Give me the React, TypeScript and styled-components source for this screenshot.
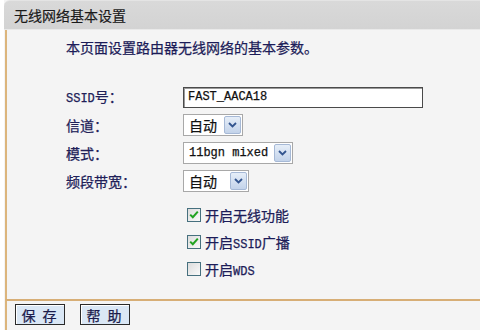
import React from "react";
import styled, {createGlobalStyle} from "styled-components";

const GlobalStyle = createGlobalStyle`
  html, body {
    margin: 0;
    padding: 0;
    background: #ffffff;
  }
  body {
    font-family: "Noto Sans CJK SC", "Liberation Sans", sans-serif;
    font-size: 14px;
  }
`;

const Panel = styled.div`
  width: 476px;
  height: 330px;
  margin-left: 4px;
  display: flex;
  flex-direction: column;
  background-color: #f4f4f4;
  overflow: hidden;
`;

const Header = styled.div`
  height: 28px;
  flex-shrink: 0;
  display: flex;
  align-items: center;
  padding-left: 10px;
  border-top-left-radius: 6px;
  border-top: 1px solid #e4e4e4;
  border-bottom: 1px solid #e9e9e9;
  background: linear-gradient(#d9d9d9, #d3d3d3);
  color: #1a1a1a;
  font-size: 14px;
  -webkit-text-stroke: 0.2px currentColor;
`;

const Body = styled.div`
  height: 269px;
  box-sizing: border-box;
  flex-shrink: 0;
  margin-left: 1px;
  border-left: 2px solid #dcb57c;
  padding: 7px 0 0 59px;
  color: #202058;
  -webkit-text-stroke: 0.25px currentColor;
`;

const Intro = styled.div`
  line-height: 20px;
  font-size: 14px;
  color: #1c1c58;
`;

const FormGrid = styled.div`
  margin-top: 26px;
  display: grid;
  grid-template-columns: 117px 1fr;
  grid-auto-rows: 28px;
  align-items: center;
`;

const Label = styled.div`
  font-size: 14px;
  line-height: 20px;
  white-space: nowrap;
`;

const Latin = styled.span`
  font-family: "Liberation Mono", "DejaVu Sans Mono", monospace;
  font-size: 12px;
`;

const TextInput = styled.div`
  width: 240px;
  height: 21px;
  box-sizing: border-box;
  border: 1px solid #4a4a4a;
  box-shadow: inset 1px 1px 0 #9a9a9a;
  background: #ffffff;
  display: flex;
  align-items: center;
  padding-left: 4px;
  font-family: "Liberation Mono", "DejaVu Sans Mono", monospace;
  font-size: 12px;
  color: #111;
`;

const SelectFrame = styled.div<{ w: number }>`
  width: ${p => p.w}px;
  height: 22px;
  box-sizing: border-box;
  border: 1px solid #a8a8a8;
  background: #ffffff;
  display: flex;
  align-items: center;
  justify-content: space-between;
  padding-left: 5px;
  color: #111;
`;

const SelectValue = styled.span<{ mono?: boolean }>`
  font-family: ${p => p.mono ? `"Liberation Mono", "DejaVu Sans Mono", monospace` : `"Noto Sans CJK SC", sans-serif`};
  font-size: ${p => p.mono ? 12 : 14}px;
  white-space: nowrap;
`;

const DropButton = styled.span`
  width: 17px;
  height: 18px;
  margin-right: 1px;
  box-sizing: border-box;
  border: 1px solid #a6b9d6;
  border-radius: 2px;
  background: linear-gradient(#e6eef8, #c3d3ea);
  display: flex;
  align-items: center;
  justify-content: center;
`;

const CheckList = styled.div`
  margin-top: 6px;
  padding-left: 121px;
`;

const CheckRow = styled.div`
  height: 27px;
  display: flex;
  align-items: center;
  gap: 4px;
  font-size: 14px;
  color: #1c1c58;
`;

const Box = styled.span`
  width: 14px;
  height: 14px;
  box-sizing: border-box;
  border: 1px solid #46707e;
  background: linear-gradient(135deg, #dcdcdc, #fafafa);
  display: flex;
  align-items: center;
  justify-content: center;
`;

const Footer = styled.div`
  flex: 1;
  margin-left: 1px;
  border-left: 2px solid #dcb57c;
  border-top: 2px solid #d7ae76;
  padding: 3px 0 0 8px;
  display: flex;
  gap: 15px;
  align-items: flex-start;
`;

const FootButton = styled.button`
  width: 50px;
  height: 21px;
  padding: 0;
  box-sizing: border-box;
  border: 1px solid #2a2a2a;
  box-shadow: inset 1px 1px 0 #ffffff;
  background: #dae7f5;
  font-family: "Noto Sans CJK SC", sans-serif;
  font-size: 14px;
  line-height: 18px;
  color: #1c1c4c;
  letter-spacing: 2px;
  -webkit-text-stroke: 0.25px currentColor;
`;

const Chevron = () => (
    <svg width="9" height="6" viewBox="0 0 9 6">
        <path d="M1 1 L4.5 4.5 L8 1" fill="none" stroke="#33558f" strokeWidth="1.8"/>
    </svg>
);

const Tick = () => (
    <svg width="10" height="9" viewBox="0 0 10 9">
        <path d="M1.2 4.6 L3.8 7.2 L8.8 1.6" fill="none" stroke="#22a322" strokeWidth="2"/>
    </svg>
);

const Select = ({w, value, mono}: { w: number; value: string; mono?: boolean }) => (
    <SelectFrame w={w}>
        <SelectValue mono={mono}>{value}</SelectValue>
        <DropButton><Chevron/></DropButton>
    </SelectFrame>
);

const Check = ({checked, children}: { checked?: boolean; children: React.ReactNode }) => (
    <CheckRow>
        <Box>{checked && <Tick/>}</Box>
        <span>{children}</span>
    </CheckRow>
);

export default function App() {
    return (
        <>
            <GlobalStyle/>
            <Panel>
                <Header>无线网络基本设置</Header>
                <Body>
                    <Intro>本页面设置路由器无线网络的基本参数。</Intro>
                    <FormGrid>
                        <Label><Latin>SSID</Latin>号：</Label>
                        <TextInput>FAST_AACA18</TextInput>

                        <Label>信道：</Label>
                        <Select w={60} value="自动"/>

                        <Label>模式：</Label>
                        <Select w={110} value="11bgn mixed" mono/>

                        <Label>频段带宽：</Label>
                        <Select w={66} value="自动"/>
                    </FormGrid>
                    <CheckList>
                        <Check checked>开启无线功能</Check>
                        <Check checked>开启<Latin>SSID</Latin>广播</Check>
                        <Check>开启<Latin>WDS</Latin></Check>
                    </CheckList>
                </Body>
                <Footer>
                    <FootButton>保 存</FootButton>
                    <FootButton>帮 助</FootButton>
                </Footer>
            </Panel>
        </>
    );
}
